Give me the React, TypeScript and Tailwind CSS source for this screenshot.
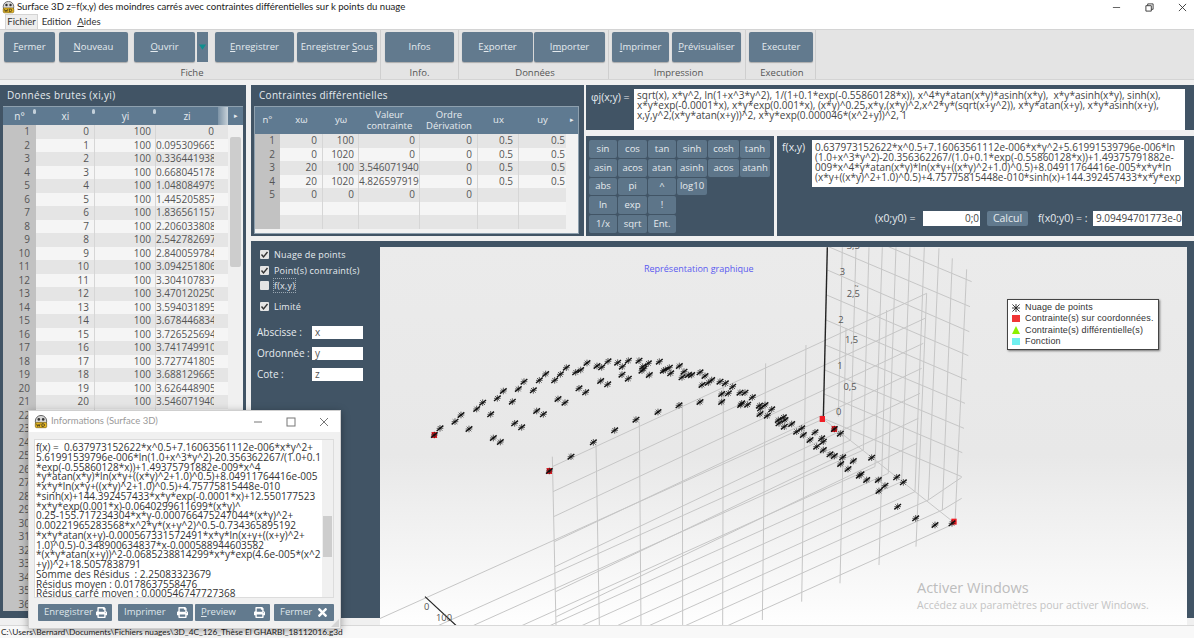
import React from "react";
import { FaPrint, FaTimes } from "react-icons/fa";

const fontStack = "font-['Open_Sans','Noto_Sans',sans-serif]";

const WdIcon = ({ className }: { className: string }) => (
  <svg viewBox="0 0 16 16" className={className}>
    <circle cx="8" cy="7" r="6.5" fill="#d8d8d8" stroke="#555" strokeWidth="1" />
    <circle cx="5.5" cy="5" r="1.5" fill="#333" />
    <circle cx="10.5" cy="5" r="1.5" fill="#333" />
    <rect x="1.5" y="8.5" width="13" height="6" rx="1.5" fill="#e8b820" stroke="#6b5200" strokeWidth="0.7" />
    <path d="M3 10l1 3 1-2 1 2 1-3M9 10v3h1.5a1.5 1.5 0 000-3z" fill="none" stroke="#222" strokeWidth="0.8" />
  </svg>
);

const Label = ({ text, u }: { text: string; u?: number }) =>
  u === undefined ? (
    <>{text}</>
  ) : (
    <>
      {text.slice(0, u)}
      <span className="underline">{text[u]}</span>
      {text.slice(u + 1)}
    </>
  );

const RibbonButton = ({ text, u, className }: { text: string; u?: number; className: string }) => (
  <div
    className={
      "flex h-[30px] items-center justify-center rounded-[2px] bg-[#627a8e] text-[9.5px] whitespace-pre text-[#e4eaee] shadow-[0_1px_1px_rgba(0,0,0,0.25)] " +
      className
    }
  >
    <Label text={text} u={u} />
  </div>
);

const RibbonGroup = ({ title, className, children }: { title: string; className: string; children: React.ReactNode }) => (
  <div className={"flex flex-col border-r border-[#cfcfcf] " + className}>
    <div className="flex h-[37px] items-start pt-[2px]">{children}</div>
    <div className="text-center text-[9.5px] leading-[12px] text-[#555]">{title}</div>
  </div>
);

const Ribbon = () => (
  <div className="flex h-[51px] border-y border-[#d4d4d4] bg-[#e4e4e4] pl-[4px]">
    <RibbonGroup title="Fiche" className="w-[377px]">
      <RibbonButton text="Fermer" u={0} className="w-[51px]" />
      <RibbonButton text="Nouveau" u={0} className="ml-[4px] w-[69px]" />
      <RibbonButton text="Ouvrir" u={0} className="ml-[6px] w-[61px]" />
      <div className="ml-[2px] flex h-[30px] w-[11px] items-center justify-center bg-[#627a8e]">
        <svg viewBox="0 0 8 6" className="h-[6px] w-[7px]">
          <path d="M0 0h8L4 6z" fill="#0f8f8f" />
        </svg>
      </div>
      <RibbonButton text="Enregistrer" u={0} className="ml-[7px] w-[79px]" />
      <RibbonButton text="Enregistrer Sous" u={12} className="ml-[3px] w-[80px]" />
    </RibbonGroup>
    <RibbonGroup title="Info." className="w-[78px] px-[4px]">
      <RibbonButton text="Infos" className="w-[70px]" />
    </RibbonGroup>
    <RibbonGroup title="Données" className="w-[150px] pl-[3px]">
      <RibbonButton text="Exporter" u={1} className="w-[71px]" />
      <RibbonButton text="Importer" u={1} className="ml-[1px] w-[71px]" />
    </RibbonGroup>
    <RibbonGroup title="Impression" className="w-[137px] pl-[3px]">
      <RibbonButton text="Imprimer" u={0} className="w-[57px]" />
      <RibbonButton text="Prévisualiser" u={0} className="ml-[3px] w-[69px]" />
    </RibbonGroup>
    <RibbonGroup title="Execution" className="w-[70px] pl-[3px]">
      <RibbonButton text="Executer" className="w-[64px]" />
    </RibbonGroup>
  </div>
);

const rawZ = [
  "0", "0.0953096654", "0.3364419382", "0.6680451789", "1.0480849799", "1.4452058570", "1.8365611570",
  "2.2060338081", "2.5427826973", "2.8400597844", "3.0942518060", "3.3041078379", "3.4701202506",
  "3.5940318958", "3.6784468349", "3.7265256943", "3.7417499109", "3.7277418055", "3.6881296658",
  "3.6264489053", "3.5460719405",
];

// rows past 21 sit under the Informations window, only their number peeks out
const rawRows = Array.from({ length: 36 }, (_, i) => ({
  n: i + 1,
  x: i < 21 ? String(i) : "",
  y: i < 21 ? "100" : "",
  z: rawZ[i] ?? "",
}));

const SortMark = ({ className }: { className: string }) => (
  <span className={"absolute top-[2px] h-[5px] w-[3px] rounded-full bg-[#c3d0da] " + className} />
);

const RawPanel = () => (
  <div className="flex h-full w-[246px] shrink-0 flex-col bg-[#415465] px-[3px]">
    <div className="h-[21px] pt-[3px] pl-[4px] text-[10px] leading-[15px] tracking-[0.35px] text-[#e6ebef]">
      Données brutes (xi,yi)
    </div>
    <div className="flex h-[19px] border-t border-[#8ea0ae] bg-[#5f7a91] text-center text-[10px] leading-[18px] text-[#e6ebef]">
      <div className="relative w-[33px]">
        n°
        <SortMark className="right-0" />
      </div>
      <div className="relative w-[59px]">
        xi
        <SortMark className="right-0" />
      </div>
      <div className="relative w-[61px]">
        yi
        <SortMark className="right-0" />
      </div>
      <div className="w-[62px]">zi</div>
      <div className="w-[10px] bg-linear-to-r from-[#7c93a6] to-[#c9d3da]" />
      <div className="flex-1 text-[7px] leading-[17px]">▸</div>
    </div>
    <div className="flex">
      <div className="w-[225px] shrink-0">
        {rawRows.map((r) => (
          <div
            key={r.n}
            className={
              "flex h-[13.5px] text-right text-[10px] leading-[13.5px] text-[#555] " +
              (r.n % 2 === 1 ? "bg-[#e5e5e5]" : "bg-[#f5f5f5]")
            }
          >
            <div className="w-[33px] bg-[#c2c2c2] pr-[6px]">{r.n}</div>
            <div className="w-[59px] border-r border-[#d6d6d6] pr-[5px]">{r.x}</div>
            <div className="w-[61px] border-r border-[#d6d6d6] pr-[4px]">{r.y}</div>
            <div className="w-[62px] overflow-hidden pr-[4px] whitespace-nowrap">
              <span className="block w-[58px] overflow-hidden">{r.z}</span>
            </div>
            <div className="flex-1" />
          </div>
        ))}
      </div>
      <div className="flex-1 bg-[#f0f0f0] px-[2px] pt-[12px]">
        <div className="h-[130px] rounded-[2px] bg-[#cdcdcd]" />
      </div>
    </div>
  </div>
);

const constraintRows = [
  ["1", "0", "100", "0", "0", "0.5", "0.5"],
  ["2", "0", "1020", "0", "0", "0.5", "0.5"],
  ["3", "20", "100", "3.546071940", "0", "0.5", "0.5"],
  ["4", "20", "1020", "4.826597919", "0", "0.5", "0.5"],
  ["5", "0", "0", "0", "0", "", ""],
  ["", "", "", "", "", "", ""],
  ["", "", "", "", "", "", ""],
];

const ConstraintsPanel = () => (
  <div className="h-[151px] w-[333px] shrink-0 bg-[#415465] px-[3px]">
    <div className="h-[21px] pt-[3px] pl-[5px] text-[10px] leading-[15px] tracking-[0.3px] text-[#e6ebef]">
      Contraintes différentielles
    </div>
    <div className="w-[325px] border border-[#8ea0ae]">
      <div className="flex h-[27px] items-center bg-[#5f7a91] text-center text-[9.5px] leading-[10.5px] text-[#e6ebef]">
        <div className="w-[25px]">n°</div>
        <div className="w-[43px]">xω</div>
        <div className="w-[36px]">yω</div>
        <div className="w-[61px]">
          Valeur
          <br />
          contrainte
        </div>
        <div className="w-[58px]">
          Ordre
          <br />
          Dérivation
        </div>
        <div className="w-[41px]">ux</div>
        <div className="w-[47px]">uy</div>
        <div className="flex-1 text-[7px]">▸</div>
      </div>
      {constraintRows.map((r, i) => (
        <div
          key={i}
          className={
            "flex h-[13.5px] text-right text-[10px] leading-[13.5px] text-[#555] " +
            (i % 2 === 0 ? "bg-[#e5e5e5]" : "bg-[#f5f5f5]")
          }
        >
          <div className="w-[25px] bg-[#c2c2c2] pr-[5px]">{r[0]}</div>
          <div className="w-[43px] border-r border-[#d6d6d6] pr-[5px]">{r[1]}</div>
          <div className="w-[36px] border-r border-[#d6d6d6] pr-[4px]">{r[2]}</div>
          <div className="w-[61px] border-r border-[#d6d6d6] pr-[4px]">{r[3]}</div>
          <div className="w-[58px] border-r border-[#d6d6d6] pr-[5px]">{r[4]}</div>
          <div className="w-[41px] border-r border-[#d6d6d6] pr-[5px]">{r[5]}</div>
          <div className="w-[47px] pr-[1px]">{r[6]}</div>
          <div className="flex-1 bg-[#f2f2f2]" />
        </div>
      ))}
      <div className="h-[4px] bg-[#f2f2f2]" />
    </div>
  </div>
);

const PhiPanel = () => (
  <div className="flex h-[45px] shrink-0 bg-[#415465] pt-[4px] pr-[9px] pl-[5px]">
    <div className="w-[43px] pt-[1px] text-[10.5px] text-[#e6ebef]">φj(x;y) =</div>
    <div className="h-[41px] flex-1 bg-white px-[3px] pt-[1px] text-[10.05px] leading-[10px] whitespace-pre text-[#444]">
      {"sqrt(x), x*y^2, ln(1+x^3*y^2), 1/(1+0.1*exp(-0.55860128*x)), x^4*y*atan(x*y)*asinh(x*y),  x*y*asinh(x*y), sinh(x),\n" +
        "x*y*exp(-0.0001*x), x*y*exp(0.001*x), (x*y)^0.25,x*y,(x*y)^2,x^2*y*(sqrt(x+y^2)), x*y*atan(x+y), x*y*asinh(x+y),\n" +
        "x,y,y^2,(x*y*atan(x+y))^2, x*y*exp(0.000046*(x^2+y))^2, 1"}
    </div>
  </div>
);

const calcKeys = [
  ["sin", "cos", "tan", "sinh", "cosh", "tanh"],
  ["asin", "acos", "atan", "asinh", "acos", "atanh"],
  ["abs", "pi", "^", "log10"],
  ["ln", "exp", "!"],
  ["1/x", "sqrt", "Ent."],
];

const keyWidths = ["w-[28px]", "w-[29px]", "w-[28px]", "w-[30px]", "w-[31px]", "w-[30px]"];

const CalcPanel = () => (
  <div className="flex h-full w-[188px] shrink-0 flex-col gap-[1px] bg-[#415465] pt-[4px] pl-[3px]">
    {calcKeys.map((row, i) => (
      <div key={i} className="flex gap-[1px]">
        {row.map((k, j) => (
          <div
            key={j}
            className={
              "flex h-[17.75px] items-center justify-center rounded-[2px] bg-[#5d7589] text-[9.5px] text-[#e6ebef] " + keyWidths[j]
            }
          >
            {k}
          </div>
        ))}
      </div>
    ))}
  </div>
);

const FunctionPanel = () => (
  <div className="flex h-full flex-1 flex-col bg-[#415465] pt-[4px] pr-[10px] pl-[5px]">
    <div className="flex">
      <div className="w-[30px] text-[10.5px] leading-[14px] text-[#e6ebef]">f(x,y)</div>
      <div className="h-[47px] flex-1 bg-white px-[3px] pt-[2px] text-[10px] leading-[10px] whitespace-pre text-[#444]">
        {"0.637973152622*x^0.5+7.16063561112e-006*x*y^2+5.61991539796e-006*ln\n" +
          "(1.0+x^3*y^2)-20.356362267/(1.0+0.1*exp(-0.55860128*x))+1.49375791882e-\n" +
          "009*x^4*y*atan(x*y)*ln(x*y+((x*y)^2+1.0)^0.5)+8.04911764416e-005*x*y*ln\n" +
          "(x*y+((x*y)^2+1.0)^0.5)+4.75775815448e-010*sinh(x)+144.392457433*x*y*exp"}
      </div>
    </div>
    <div className="mt-[24px] flex items-center text-[10.5px] text-[#e6ebef]">
      <div className="ml-[93px] w-[48px]">(x0;y0) =</div>
      <div className="h-[15px] w-[57px] bg-white pr-[1px] text-right text-[10px] leading-[15px] text-[#444]">0;0</div>
      <div className="ml-[7px] h-[15px] w-[41px] rounded-[2px] bg-[#627a8e] text-center leading-[14px]">Calcul</div>
      <div className="ml-[10px] w-[55px]">f(x0;y0) = :</div>
      <div className="h-[15px] w-[89px] overflow-hidden bg-white pl-[3px] text-[10px] leading-[15px] whitespace-nowrap text-[#444]">
        9.09494701773e-013
      </div>
    </div>
  </div>
);

const Checkbox = ({ label, checked, className }: { label: React.ReactNode; checked: boolean; className: string }) => (
  <div className={"flex h-[13px] items-center gap-[5px] text-[9px] tracking-[0.2px] text-[#e6ebef] " + className}>
    <span className="flex h-[9px] w-[9px] items-center justify-center rounded-[1px] bg-[#e4e4e4]">
      {checked && (
        <svg viewBox="0 0 9 9" className="h-[9px] w-[9px]">
          <path d="M1.5 4.5l2 2.5 4-5" fill="none" stroke="#333" strokeWidth="1.4" />
        </svg>
      )}
    </span>
    {label}
  </div>
);

const AxisField = ({ label, value, className }: { label: string; value: string; className: string }) => (
  <div className={"flex h-[13.5px] items-center text-[10px] leading-[13.5px] text-[#e6ebef] " + className}>
    <div className="w-[55px]">{label}</div>
    <div className="h-[13.5px] w-[51px] bg-white pl-[3px] text-[10px] text-[#555]">{value}</div>
  </div>
);

const ChartSidebar = () => (
  <div className="w-[129px] shrink-0 pt-[1px] pl-[9px]">
    <Checkbox label="Nuage de points" checked className="" />
    <Checkbox label="Point(s) contraint(s)" checked className="mt-[3px]" />
    <Checkbox label={<span className="outline-1 outline-[#9aa7b2] outline-dotted">f(x,y)</span>} checked={false} className="mt-[2px]" />
    <Checkbox label="Limité" checked className="mt-[8px]" />
    <AxisField label="Abscisse :" value="x" className="-ml-[3px] mt-[12.5px]" />
    <AxisField label="Ordonnée :" value="y" className="-ml-[3px] mt-[7.5px]" />
    <AxisField label="Cote :" value="z" className="-ml-[3px] mt-[7.5px]" />
  </div>
);

// everything below is in the 3x coordinates of the crop: x = (px - 380) * 3, y = (py - 240) * 3
const stars: number[][] = [
  [163, 585], [508, 693], [1363, 567], [180, 565], [225, 545], [243, 525], [290, 507], [308, 488], [352, 475], [370, 453],
  [415, 447], [432, 425], [478, 421], [497, 402], [541, 403], [559, 383], [587, 397], [602, 390], [621, 369], [651, 378],
  [665, 382], [684, 364], [713, 368], [727, 380], [745, 362], [777, 362], [788, 380], [792, 386], [786, 392], [805, 370],
  [838, 365], [850, 392], [856, 389], [868, 383], [872, 400], [898, 378], [912, 395], [906, 412], [925, 405], [935, 405],
  [960, 397], [975, 408], [995, 420], [985, 428], [966, 435], [1020, 425], [1036, 430], [1058, 440], [1080, 458],
  [1095, 458], [1045, 460], [1025, 462], [1117, 472], [1025, 486], [1085, 490], [1082, 495], [1103, 494], [1138, 497],
  [1155, 495], [1175, 508], [1142, 505], [1140, 522], [1162, 527], [1195, 540], [1210, 532], [1215, 540], [1197, 550],
  [1235, 552], [1213, 560], [1250, 575], [1265, 565], [1270, 585], [1305, 577], [1290, 600], [1325, 595], [1330, 605],
  [1310, 620], [1330, 630], [1350, 643], [1363, 648], [1388, 652], [1382, 672], [1420, 663], [1404, 687], [1475, 653],
  [1438, 707], [1443, 703], [1460, 720], [1495, 720], [1497, 753], [1381, 581], [1550, 712], [1570, 727], [1515, 737],
  [1553, 800], [1607, 835], [1665, 855], [1716, 850], [267, 567], [332, 523], [397, 485], [460, 451], [524, 421], [340, 594],
  [361, 606], [404, 550], [425, 562], [470, 513], [490, 523], [534, 477], [555, 488], [597, 445], [617, 457], [662, 423],
  [683, 433], [726, 404], [745, 416], [808, 405], [573, 650], [640, 607], [704, 571], [768, 539], [834, 516], [897, 496],
  [960, 486],
];

const reds: number[][] = [
  [163, 585], [508, 693], [1327, 537], [1363, 567], [1722, 845],
];

const wallVerticals = [
  [1760, 88, 1725, 850], [1717, 55, 1687, 810], [1677, 25, 1645, 780], [1633, 22, 1605, 755], [1590, 22, 1565, 725],
  [1548, 22, 1525, 700], [1507, 22, 1485, 680], [1467, 22, 1450, 630], [1428, 22, 1412, 600], [1387, 22, 1375, 530],
];

const frontVerticals = [
  [1640, 160, 1608, 920], [1520, 210, 1497, 975], [1398, 265, 1380, 1030], [1278, 315, 1265, 1085], [1157, 370, 1147, 1140],
  [1030, 430, 1028, 1155], [907, 490, 908, 1155], [778, 545, 783, 1155], [648, 610, 658, 1155], [517, 650, 528, 1155],
];

const wallDiagonals = [
  [1775, 125, 1525, 20], [1770, 200, 1345, 20], [1768, 275, 1342, 90], [1765, 347, 1340, 165], [1760, 420, 1338, 240],
  [1755, 490, 1336, 315], [1752, 565, 1334, 390], [1747, 638, 1332, 462], [1745, 710, 1330, 535],
];

const frontRows = [0, 1, 2, 3, 4, 5, 6].map((i) => [517 + 2 * i, 680 + 75 * i, 1640 - 5 * i, 160 + 75 * i]);

const floorEnds = [
  [1330, 537], [1412, 600], [1450, 630], [1485, 680], [1525, 700], [1565, 725], [1605, 755], [1645, 780], [1687, 810], [1725, 850],
];

const GridLine = ({ l }: { l: number[] }) => (
  <line x1={l[0]} y1={l[1]} x2={l[2]} y2={l[3]} stroke="#c6c6c6" strokeWidth="1" vectorEffect="non-scaling-stroke" />
);

const Star = ({ x, y }: { x: number; y: number }) => (
  <g transform={`translate(${x} ${y})`} stroke="#111">
    <path d="M-10 8L10 -8" strokeWidth="4.2" />
    <path d="M-7 -7L7 7M0 -10V10M-10 0H10" strokeWidth="2" />
  </g>
);

const axisLabels: [string, number, number][] = [
  ["3", 1387, 105], ["2,5", 1420, 170], ["2", 1383, 250], ["1,5", 1415, 310], ["1", 1380, 388], ["0,5", 1410, 450],
  ["0", 1376, 525], ["3,5", 1420, 28], ["0", 140, 1110], ["100", 192, 1143],
];

const legendItems = [
  ["Nuage de points", "star"],
  ["Contrainte(s) sur coordonnées.", "bg-[#f03535]"],
  ["Contrainte(s) différentielle(s)", "tri"],
  ["Fonction", "bg-[#70f0f0]"],
];

const Chart = () => (
  <div className="relative h-[378px] flex-1 bg-linear-to-b from-[#ebebeb] via-[#e8e8e8] via-55% to-[#fefefe]">
    <svg viewBox="380 247 807 378" className="absolute inset-0 h-full w-full" preserveAspectRatio="none">
      <g transform="translate(380 240) scale(0.33333)">
        {wallDiagonals.map((l, i) => <GridLine key={i} l={l} />)}
        {wallVerticals.map((l, i) => <GridLine key={i} l={l} />)}
        {frontRows.map((l, i) => <GridLine key={i} l={l} />)}
        {frontVerticals.map((l, i) => <GridLine key={i} l={l} />)}
        {floorEnds.map((e, i) => <GridLine key={i} l={[e[0] - 1400, e[1] + 630, e[0], e[1]]} />)}
        <GridLine l={[1330, 537, 1725, 850]} />
        <GridLine l={[1687, 810, 1745, 775]} />
        <GridLine l={[1645, 780, 1745, 712]} />
        <line x1="1342" y1="22" x2="1330" y2="535" stroke="#222" strokeWidth="1.4" vectorEffect="non-scaling-stroke" />
        <line x1="135" y1="1070" x2="230" y2="1158" stroke="#222" strokeWidth="1.2" vectorEffect="non-scaling-stroke" />
        {axisLabels.map(([t, x, y]) => (
          <text key={t + x} x={x} y={y} textAnchor="middle" fontSize="28" fill="#555" fontFamily="Open Sans">
            {t}
          </text>
        ))}
        <text x="1425" y="138" fontSize="16" textAnchor="middle" fill="#555" fontFamily="Open Sans" transform="rotate(90 1425 138)">
          z
        </text>
        {reds.map((r, i) => (
          <rect key={i} x={r[0] - 8} y={r[1] - 9} width="16" height="18" fill="#f01d25" />
        ))}
        {stars.map((s, i) => <Star key={i} x={s[0]} y={s[1]} />)}
      </g>
    </svg>
    <div className="absolute top-[15px] left-[264px] text-[9px] text-[#5a5af0]">Représentation graphique</div>
    <div className="absolute top-[52px] left-[627px] h-[51px] w-[152px] border border-[#444] bg-white pt-[2px] pl-[4px] font-['Liberation_Sans',sans-serif] text-[9px] leading-[11.3px] tracking-[0.15px] whitespace-nowrap text-[#333] shadow-[1px_1px_2px_rgba(0,0,0,0.5)]">
      {legendItems.map(([t, mark]) => (
        <div key={t} className="flex items-center gap-[5px]">
          {mark === "star" ? (
            <svg viewBox="-9 -9 18 18" className="h-[8px] w-[8px] shrink-0">
              <path d="M-8 -8L8 8M-8 8L8 -8M0 -9V9M-9 0H9" stroke="#222" strokeWidth="2" />
            </svg>
          ) : mark === "tri" ? (
            <svg viewBox="0 0 8 8" className="h-[8px] w-[8px] shrink-0">
              <path d="M4 0L8 8H0z" fill="#8cf000" />
            </svg>
          ) : (
            <span className={"h-[7px] w-[8px] shrink-0 " + mark} />
          )}
          {t}
        </div>
      ))}
    </div>
    <div className="absolute top-[332px] left-[537px] text-[14.5px] leading-[18px] text-[#bdbdbd]">Activer Windows</div>
    <div className="absolute top-[351px] left-[537px] text-[10.5px] leading-[14px] text-[#c4c4c4]">
      Accédez aux paramètres pour activer Windows.
    </div>
  </div>
);

const infoLines = [
  "f(x) =  0.637973152622*x^0.5+7.16063561112e-006*x*y^2+",
  "5.61991539796e-006*ln(1.0+x^3*y^2)-20.356362267/(1.0+0.1",
  "*exp(-0.55860128*x))+1.49375791882e-009*x^4",
  "*y*atan(x*y)*ln(x*y+((x*y)^2+1.0)^0.5)+8.04911764416e-005",
  "*x*y*ln(x*y+((x*y)^2+1.0)^0.5)+4.75775815448e-010",
  "*sinh(x)+144.392457433*x*y*exp(-0.0001*x)+12.550177523",
  "*x*y*exp(0.001*x)-0.0640299611699*(x*y)^",
  "0.25-155.717234304*x*y-0.000766475247044*(x*y)^2+",
  "0.00221965283568*x^2*y*(x+y^2)^0.5-0.734365895192",
  "*x*y*atan(x+y)-0.000567331572491*x*y*ln(x+y+((x+y)^2+",
  "1.0)^0.5)-0.348900634837*x-0.000588944603582",
  "*(x*y*atan(x+y))^2-0.0685238814299*x*y*exp(4.6e-005*(x^2",
  "+y))^2+18.5057838791",
  "Somme des Résidus  : 2.25083323679",
  "Résidus moyen : 0.0178637558476",
  "Résidus carré moyen : 0.000546747727368",
];

const PopupButton = ({ text, u, icon, className }: { text: string; u?: number; icon: React.ReactNode; className: string }) => (
  <div className={"flex h-[17px] items-center justify-between rounded-[1px] bg-[#627a8e] pr-[5px] pl-[6px] text-[9.5px] text-[#dfe6eb] " + className}>
    <span>
      <Label text={text} u={u} />
    </span>
    {icon}
  </div>
);

const InfoWindow = () => (
  <div className="absolute top-[410px] left-[28px] h-[219px] w-[313px] border border-[#cfcfcf] bg-[#f0f0f0] shadow-[0_2px_8px_rgba(0,0,0,0.35)]">
    <div className="flex h-[21px] items-center bg-white pl-[5px]">
      <WdIcon className="h-[14px] w-[14px]" />
      <span className="ml-[3px] font-['Lato',sans-serif] text-[9.5px] text-[#9a9a9a]">Informations (Surface 3D)</span>
      <div className="ml-auto flex items-center gap-[23px] pr-[11px]">
        <svg viewBox="0 0 10 10" className="h-[10px] w-[10px]">
          <path d="M1 5h8" stroke="#777" />
        </svg>
        <svg viewBox="0 0 10 10" className="h-[10px] w-[10px]">
          <rect x="1" y="1" width="8" height="8" fill="none" stroke="#777" />
        </svg>
        <svg viewBox="0 0 10 10" className="h-[10px] w-[10px]">
          <path d="M1 1l8 8M9 1l-8 8" stroke="#777" />
        </svg>
      </div>
    </div>
    <div className="mx-[5px] mt-[7px] flex h-[159px] w-[300px] border border-[#dcdcdc] bg-white">
      <div className="flex-1 overflow-hidden pt-[3px] pl-[1px] text-[10px] leading-[9.75px] whitespace-pre text-[#333]">
        {infoLines.map((l) => (
          <div key={l} className="h-[9.75px]">{l}</div>
        ))}
      </div>
      <div className="w-[11px] bg-[#f0f0f0] pt-[76px] pl-[1px]">
        <div className="h-[41px] w-[9px] bg-[#cdcdcd]" />
      </div>
    </div>
    <div className="mt-[6px] flex pl-[9px]">
      <PopupButton text="Enregistrer" icon={<FaPrint className="h-[11px] w-[11px] text-white" />} className="w-[74px]" />
      <PopupButton text="Imprimer" icon={<FaPrint className="h-[11px] w-[11px] text-white" />} className="ml-[6px] w-[75px]" />
      <PopupButton text="Preview" u={0} icon={<FaPrint className="h-[11px] w-[11px] text-white" />} className="ml-[2px] w-[75px]" />
      <PopupButton text="Fermer" icon={<FaTimes className="h-[13px] w-[13px] text-white" />} className="ml-[4px] w-[60px]" />
    </div>
    <svg viewBox="0 0 8 8" className="absolute right-[1px] bottom-[1px] h-[8px] w-[8px]">
      <path d="M8 0v8H0z" fill="#d4d4d4" />
    </svg>
  </div>
);

const App = () => {
  return (
    <div className={"relative flex h-screen w-screen flex-col overflow-hidden bg-[#f0f0f0] " + fontStack}>
      <div className="flex h-[14px] items-center bg-white pl-[2px] font-['Lato',sans-serif] text-[9.6px] text-[#222]">
        <WdIcon className="h-[13px] w-[13px]" />
        <span className="ml-[2px]">Surface 3D z=f(x,y) des moindres carrés avec contraintes différentielles sur k points du nuage</span>
        <div className="ml-auto flex items-center gap-[24px] pr-[7px]">
          <svg viewBox="0 0 10 10" className="h-[9px] w-[9px]">
            <path d="M1 5h8" stroke="#555" />
          </svg>
          <svg viewBox="0 0 10 10" className="h-[9px] w-[9px]">
            <path d="M1 3h6v6H1zM3 3V1h6v6H7" fill="none" stroke="#333" />
          </svg>
          <svg viewBox="0 0 10 10" className="h-[9px] w-[9px]">
            <path d="M1 1l8 8M9 1l-8 8" stroke="#333" />
          </svg>
        </div>
      </div>
      <div className="flex h-[15px] items-end bg-white pl-[5px] font-['Lato',sans-serif] text-[9.6px] text-[#333]">
        <div className="h-[15px] w-[33px] border-x border-t border-[#d4d4d4] bg-[#eeeeee] text-center leading-[14px]">Fichier</div>
        <div className="w-[37px] text-center leading-[14px]">Edition</div>
        <div className="w-[28px] text-center leading-[14px]">
          <Label text="Aides" u={0} />
        </div>
      </div>
      <Ribbon />
      <div className="mt-[5px] flex h-[533px] gap-[5px]">
        <RawPanel />
        <div className="flex flex-1 flex-col gap-[5px]">
          <div className="flex h-[151px] shrink-0 gap-[2px]">
            <ConstraintsPanel />
            <div className="flex flex-1 flex-col gap-[6px]">
              <PhiPanel />
              <div className="flex h-[100px] gap-[3px]">
                <CalcPanel />
                <FunctionPanel />
              </div>
            </div>
          </div>
          <div className="flex h-[377px] bg-[#415465] pt-[6px] pr-[7px]">
            <ChartSidebar />
            <Chart />
          </div>
        </div>
      </div>
      <div className="h-[8px] border-b border-[#d8d8d8]" />
      <div className="h-[12px] bg-[#f8f8f8] pl-[1px] font-['Lato',sans-serif] text-[8.3px] leading-[12px] text-[#222]">
        C:\Users\Bernard\Documents\Fichiers nuages\3D_4C_126_Thèse El GHARBI_18112016.g3d
      </div>
      <InfoWindow />
    </div>
  );
};

export default App;
